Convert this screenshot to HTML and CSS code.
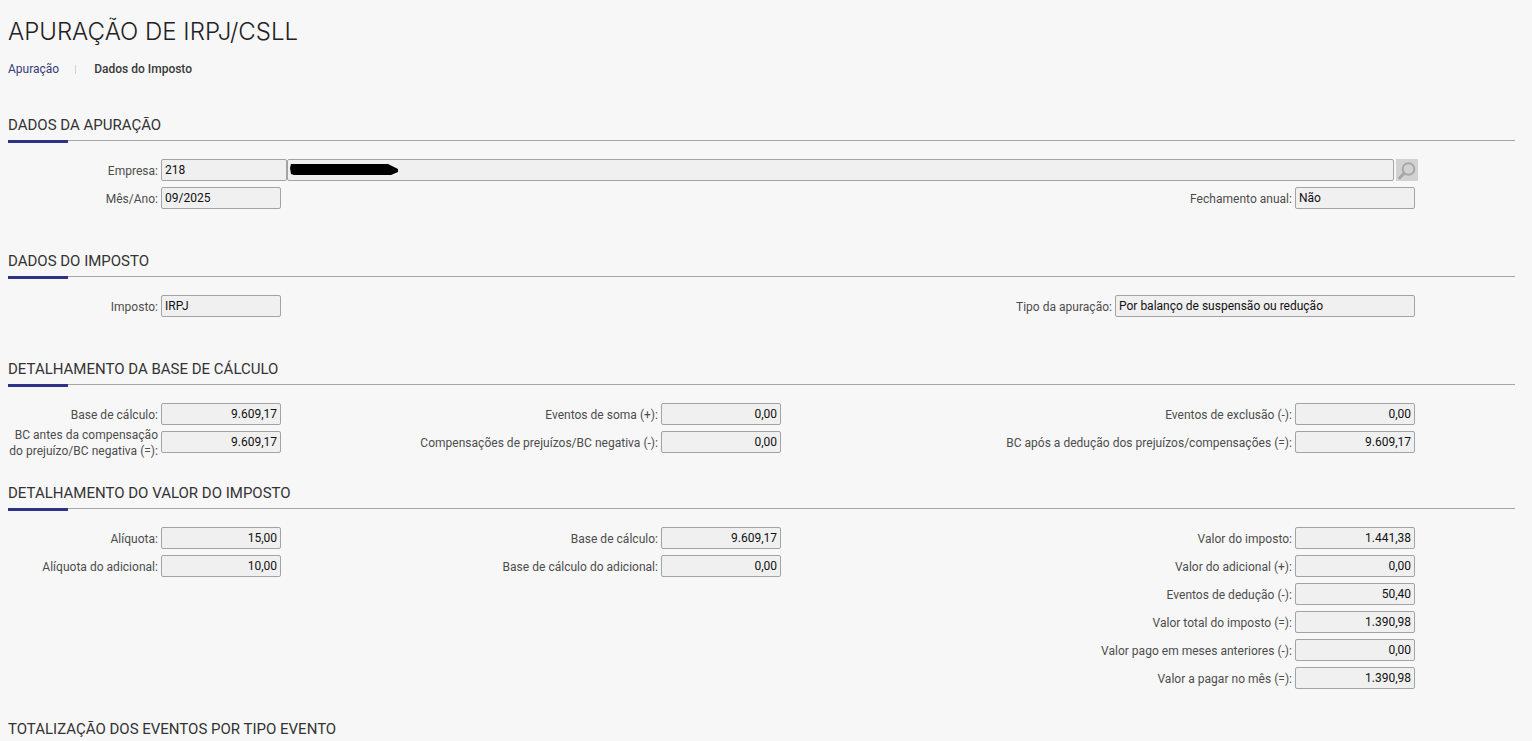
FILE: index.html
```html
<!DOCTYPE html>
<html lang="pt-BR">
<head>
<meta charset="utf-8">
<title>Apuração de IRPJ/CSLL</title>
<link rel="stylesheet" href="styles.css">
</head>
<body>
<h1 class="title">APURAÇÃO DE IRPJ/CSLL</h1>
<nav class="crumbs"><a class="crumb">Apuração</a><span class="crumb-sep"></span><span class="crumb-current">Dados do Imposto</span></nav>

<section class="section section-first section-tall">
  <h2 class="heading">DADOS DA APURAÇÃO</h2>
  <div class="empresa">
    <span class="label">Empresa:</span>
    <div class="field field-code">218</div>
    <div class="field field-name"><svg class="redact" width="112" height="14" viewBox="0 0 112 14"><path d="M3 1H100L110 6V9L103 12H6L3 11L2 5Z" fill="#000"/></svg></div>
    <button class="lookup" type="button" aria-label="Pesquisar"><svg width="22" height="22" viewBox="0 0 22 22"><circle cx="12.5" cy="10" r="5.8" fill="none" stroke="#a6a6a6" stroke-width="2"/><path d="M8 14.5 3.5 19" stroke="#a6a6a6" stroke-width="2.8" stroke-linecap="round"/></svg></button>
  </div>
  <div class="grid">
    <span class="label">Mês/Ano:</span><div class="field">09/2025</div>
    <span class="label col-5">Fechamento anual:</span><div class="field">Não</div>
  </div>
</section>

<section class="section section-tall">
  <h2 class="heading">DADOS DO IMPOSTO</h2>
  <div class="grid grid-tax">
    <span class="label">Imposto:</span><div class="field">IRPJ</div>
    <span class="label">Tipo da apuração:</span><div class="field">Por balanço de suspensão ou redução</div>
  </div>
</section>

<section class="section">
  <h2 class="heading">DETALHAMENTO DA BASE DE CÁLCULO</h2>
  <div class="grid">
    <span class="label">Base de cálculo:</span><div class="field num">9.609,17</div>
    <span class="label">Eventos de soma (+):</span><div class="field num">0,00</div>
    <span class="label">Eventos de exclusão (-):</span><div class="field num">0,00</div>
    <span class="label label-two">BC antes da compensação<br>do prejuízo/BC negativa (=):</span><div class="field num">9.609,17</div>
    <span class="label">Compensações de prejuízos/BC negativa (-):</span><div class="field num">0,00</div>
    <span class="label">BC após a dedução dos prejuízos/compensações (=):</span><div class="field num">9.609,17</div>
  </div>
</section>

<section class="section">
  <h2 class="heading">DETALHAMENTO DO VALOR DO IMPOSTO</h2>
  <div class="grid">
    <span class="label">Alíquota:</span><div class="field num">15,00</div>
    <span class="label">Base de cálculo:</span><div class="field num">9.609,17</div>
    <span class="label">Valor do imposto:</span><div class="field num">1.441,38</div>
    <span class="label">Alíquota do adicional:</span><div class="field num">10,00</div>
    <span class="label">Base de cálculo do adicional:</span><div class="field num">0,00</div>
    <span class="label">Valor do adicional (+):</span><div class="field num">0,00</div>
    <span class="label col-5">Eventos de dedução (-):</span><div class="field num">50,40</div>
    <span class="label col-5">Valor total do imposto (=):</span><div class="field num">1.390,98</div>
    <span class="label col-5">Valor pago em meses anteriores (-):</span><div class="field num">0,00</div>
    <span class="label col-5">Valor a pagar no mês (=):</span><div class="field num">1.390,98</div>
  </div>
</section>

<section class="section">
  <h2 class="heading heading-plain">TOTALIZAÇÃO DOS EVENTOS POR TIPO EVENTO</h2>
</section>
</body>
</html>
```
FILE: styles.css
```css
html, body {
  height: 741px;
  overflow: hidden;
}
body {
  margin: 0;
  padding: 0 17px 0 8px;
  background: #f7f7f7;
  color: #4a4a4a;
  font-family: Roboto, "Liberation Sans", sans-serif;
  font-size: 13px;
}
.title {
  margin: 0;
  padding-top: 17px;
  height: 30px;
  line-height: 30px;
  font-family: Inter, Roboto, sans-serif;
  font-size: 24px;
  font-weight: 300;
  color: #222;
  white-space: nowrap;
}
.crumbs {
  display: flex;
  align-items: center;
  margin-top: 14px;
  height: 16px;
  font-size: 12px;
  line-height: 16px;
}
.crumb { color: #383c78; }
.crumb-sep {
  width: 1px;
  height: 9px;
  margin: 0 18px 0 16px;
  background: #d4d4d4;
}
.crumb-current { font-weight: 500; color: #3a3a3a; }
.section { margin-top: 29px; }
.section-first { margin-top: 37px; }
.section-tall { padding-bottom: 12px; }
.heading {
  position: relative;
  margin: 0 0 18px;
  height: 26px;
  line-height: 22px;
  border-bottom: 1px solid #a5a5a5;
  font-size: 15px;
  font-weight: 400;
  color: #333;
}
.heading::after {
  content: "";
  position: absolute;
  left: 0;
  bottom: -3px;
  width: 60px;
  height: 3px;
  background: #2d3287;
}
.empresa {
  display: flex;
  align-items: center;
  height: 22px;
  margin-bottom: 6px;
}
.empresa .label { width: 150px; margin-right: 3px; flex: none; }
.empresa .field-code { width: 126px; flex: none; }
.empresa .field-name { flex: 0 0 1107px; display: flex; align-items: center; padding: 0; }
.redact { margin-left: 0; }
.lookup {
  flex: none;
  width: 22px;
  height: 22px;
  margin-left: 2px;
  padding: 0;
  border: 0;
  background: #d2d2d2;
}
.grid {
  display: grid;
  grid-template-columns: 150px 120px 374px 120px 508px 120px;
  grid-auto-rows: 22px;
  column-gap: 3px;
  row-gap: 6px;
}
.grid-tax { grid-template-columns: 150px 120px 828px 300px; }
.label {
  align-self: center;
  margin-top: 2px;
  text-align: right;
  font-size: 12px;
  line-height: 14px;
  color: #4d4d4d;
  white-space: nowrap;
  letter-spacing: 0.02px;
}
.label-two { justify-self: end; line-height: 16px; }
.col-5 { grid-column: 5; }
.field {
  box-sizing: border-box;
  height: 22px;
  padding: 0 3px;
  border: 1px solid #a3a3a3;
  border-radius: 2px;
  background: #f0f0f0;
  color: #111;
  font-size: 12px;
  line-height: 21px;
  white-space: nowrap;
  overflow: hidden;
}
.num { text-align: right; padding-right: 3px; }
.heading-plain { border-bottom: 0; }
.heading-plain::after { display: none; }
```
